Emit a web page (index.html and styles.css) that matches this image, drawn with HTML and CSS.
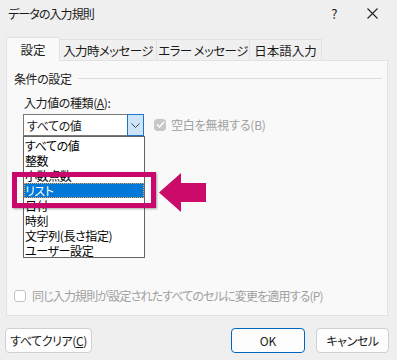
FILE: index.html
```html
<!DOCTYPE html>
<html lang="ja">
<head>
<meta charset="utf-8">
<link rel="stylesheet" href="styles.css">
</head>
<body>
<div class="dialog">
  <div class="titlebar">
    <span class="title">データの入力規則</span>
    <span class="help">?</span>
    <svg class="close" width="11" height="11" viewBox="0 0 11 11"><path d="M0.5 0.5L10.5 10.5M10.5 0.5L0.5 10.5" stroke="#222" stroke-width="1.1" fill="none"/></svg>
  </div>
  <div class="tabs">
    <div class="tab active t1">設定</div>
    <div class="tab t2">入力時メッセージ</div>
    <div class="tab t3">エラー メッセージ</div>
    <div class="tab t4">日本語入力</div>
  </div>
  <div class="panel">
    <div class="group-head"><span>条件の設定</span><div class="rule"></div></div>
    <div class="label">入力値の種類(<u>A</u>):</div>
    <div class="row">
      <div class="combo">
        <span class="combo-text">すべての値</span>
        <span class="combo-btn"><svg width="9" height="5" viewBox="0 0 9 5"><path d="M0.5 0.5L4.5 4.5L8.5 0.5" stroke="#444" fill="none"/></svg></span>
      </div>
      <label class="check disabled">
        <span class="box checked"><svg width="9" height="7" viewBox="0 0 9 7"><path d="M1 3.5L3.5 6L8 1" stroke="#fff" stroke-width="1.5" fill="none"/></svg></span>
        <span>空白を無視する(B)</span>
      </label>
    </div>
    <ul class="list">
      <li>すべての値</li>
      <li>整数</li>
      <li>小数点数</li>
      <li class="sel">リスト</li>
      <li>日付</li>
      <li>時刻</li>
      <li>文字列(長さ指定)</li>
      <li>ユーザー設定</li>
    </ul>
    <label class="check disabled bottom">
      <span class="box"></span>
      <span class="long">同じ入力規則が設定されたすべてのセルに変更を適用する(P)</span>
    </label>
  </div>
  <div class="buttons">
    <button class="btn clear">すべてクリア(<u>C</u>)</button>
    <div class="spacer"></div>
    <button class="btn ok">OK</button>
    <button class="btn cancel">キャンセル</button>
  </div>
  <div class="highlight"></div>
  <svg class="arrow" width="48" height="40" viewBox="0 0 48 40"><polygon points="0,19.5 22,0 22,10 47,10 47,29 22,29 22,39" fill="#cc0a6a"/></svg>
</div>
</body>
</html>
```
FILE: styles.css
```css
* { box-sizing: border-box; }
html, body { margin: 0; padding: 0; }
body {
  width: 397px;
  height: 360px;
  background: #efefef;
  font-family: "Noto Sans CJK JP", "Noto Sans", sans-serif;
  font-size: 12px;
  color: #1a1a1a;
  font-feature-settings: "palt";
  letter-spacing: -0.4px;
  overflow: hidden;
}
.dialog { position: relative; width: 397px; height: 360px; }
.titlebar {
  height: 30px;
  display: flex;
  align-items: center;
  padding: 0 8px;
}
.title { flex: 1; margin-top: -4px; letter-spacing: -0.9px; }
.help { margin-right: 30px; margin-top: -4px; font-size: 13px; }
.close { margin-right: 11px; margin-top: -4px; }
.tabs {
  display: flex;
  align-items: flex-end;
  height: 30px;
  padding: 6px 0 0 6px;
}
.tab {
  height: 21px;
  display: flex;
  align-items: center;
  justify-content: center;
  border: 1px solid #e2e2e2;
  border-bottom: none;
  border-left: none;
  background: #f0f0f0;
  white-space: nowrap;
  font-size: 12.5px;
  letter-spacing: -0.6px;
}
.tab.active {
  height: 24px;
  background: #f9f9f9;
  border-left: 1px solid #e2e2e2;
  position: relative;
  top: 1px;
  z-index: 1;
  letter-spacing: 0;
}
.t1 { width: 54px; }
.t2 { width: 97px; }
.t3 { width: 93px; }
.t4 { width: 72px; letter-spacing: 0; }
.panel {
  margin: 0 9px 0 6px;
  height: 256px;
  background: #f9f9f9;
  border: 1px solid #e2e2e2;
  display: flex;
  flex-direction: column;
  padding: 9px 5px 0 7px;
}
.group-head {
  display: flex;
  align-items: center;
  height: 16px;
}
.rule { flex: 1; height: 1px; background: #dcdcdc; margin-left: 6px; }
.label { margin: 8px 0 0 10px; height: 17px; line-height: 17px; }
.label u, .btn u { text-decoration: underline; }
.row { display: flex; align-items: flex-start; margin-top: 3px; margin-left: 9px; }
.combo {
  width: 121px;
  height: 22px;
  border: 1px solid #7a7a7a;
  background: #fff;
  display: flex;
  align-items: center;
  position: relative;
}
.combo-text { flex: 1; padding-left: 3px; }
.combo-btn {
  width: 17px;
  height: 22px;
  margin: -1px -1px -1px 0;
  background: #cce4f7;
  border: 1px solid #1f73c8;
  display: flex;
  align-items: center;
  justify-content: center;
}
.check { display: flex; align-items: center; gap: 5px; }
.check.disabled { color: #9f9f9f; }
.row .check { margin-left: 10px; margin-top: 2px; letter-spacing: -0.2px; }
.box {
  width: 12px;
  height: 12px;
  flex: none;
  border: 1px solid #c2c2c2;
  border-radius: 3px;
  background: #fff;
  display: flex;
  align-items: center;
  justify-content: center;
}
.box.checked { background: #c8c8c8; border-color: #c8c8c8; }
.list {
  list-style: none;
  margin: 0 0 0 9px;
  padding: 1px 0 0 0;
  width: 122px;
  height: 122px;
  border: 1px solid #646464;
  background: #fff;
  color: #000;
}
.list li { height: 15px; line-height: 15px; padding-left: 1px; }
.list li.sel {
  background: #0078d7;
  color: #fff;
  outline: 1px dotted #f3a34b;
  outline-offset: -1px;
}
.check.bottom { margin-top: auto; margin-bottom: 11px; gap: 6px; }
.long { letter-spacing: -0.85px; white-space: nowrap; }
.buttons {
  display: flex;
  align-items: center;
  padding: 12px 8px 0 5px;
  gap: 11px;
}
.spacer { flex: 1; }
.btn {
  font-family: inherit;
  font-size: 12px;
  font-feature-settings: "palt";
  letter-spacing: -0.4px;
  height: 25px;
  background: #fdfdfd;
  border: 1px solid #d0d0d0;
  border-radius: 4px;
  color: #1a1a1a;
  padding: 0;
}
.clear { width: 87px; }
.ok { width: 74px; border-color: #0067c0; letter-spacing: 0; }
.cancel { width: 73px; }
.highlight {
  position: absolute;
  left: 12px;
  top: 172px;
  width: 144px;
  height: 36px;
  border: 5px solid #c8086a;
  box-shadow: 1px 1px 2px rgba(0,0,0,0.35);
}
.arrow { position: absolute; left: 159px; top: 173px; }
```
